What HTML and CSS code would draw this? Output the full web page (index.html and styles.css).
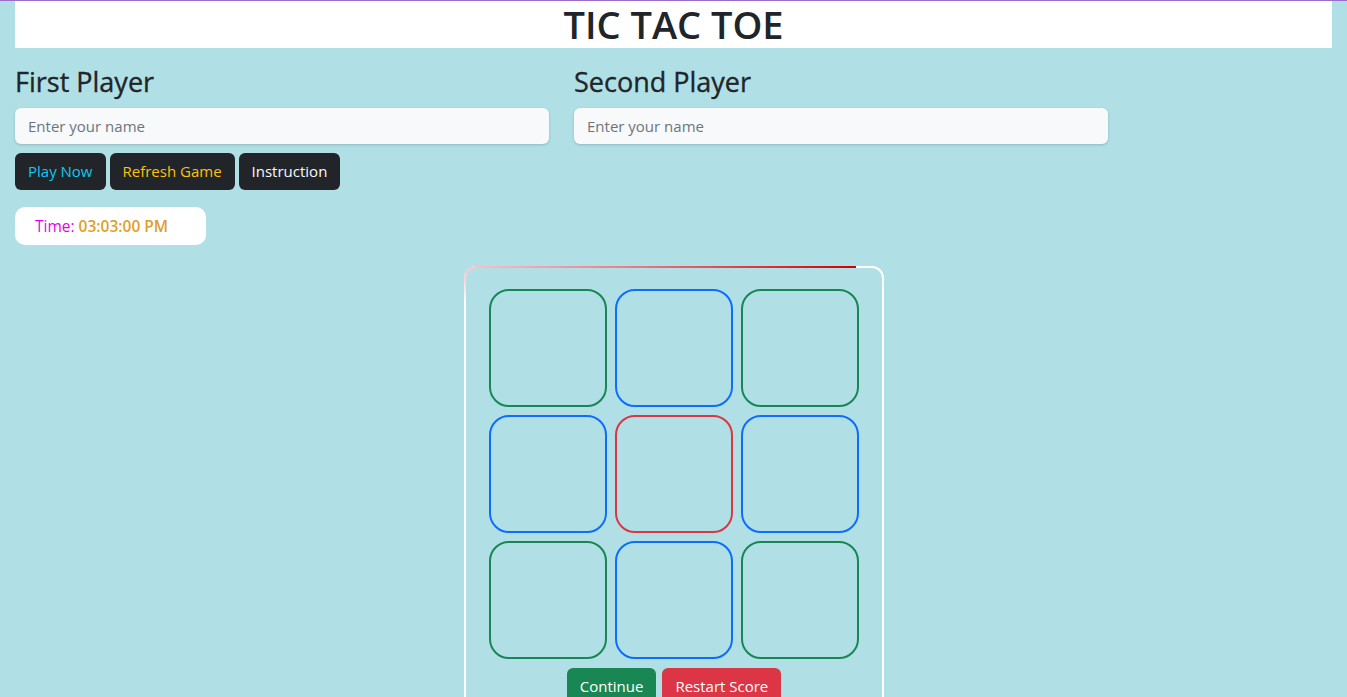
FILE: index.html
```html
<!DOCTYPE html>
<html lang="en">
<head>
<meta charset="utf-8">
<title>Tic Tac Toe</title>
<link rel="stylesheet" href="styles.css">
</head>
<body>
<div class="page">
  <header class="header"><h1 class="title">TIC TAC TOE</h1></header>
  <div class="players">
    <div class="player">
      <h3 class="player-title">First Player</h3>
      <input class="name-input" type="text" placeholder="Enter your name">
    </div>
    <div class="player">
      <h3 class="player-title">Second Player</h3>
      <input class="name-input" type="text" placeholder="Enter your name">
    </div>
  </div>
  <div class="actions">
    <button class="btn btn-dark text-info">Play Now</button>
    <button class="btn btn-dark text-warning">Refresh Game</button>
    <button class="btn btn-dark text-light">Instruction</button>
  </div>
  <div class="time-box"><span class="time-label">Time:</span> <span class="time-value">03:03:00 PM</span></div>
  <div class="board-wrap">
    <div class="board">
      <div class="board-glow"></div>
      <div class="grid">
        <div class="cell green"></div>
        <div class="cell blue"></div>
        <div class="cell green"></div>
        <div class="cell blue"></div>
        <div class="cell red"></div>
        <div class="cell blue"></div>
        <div class="cell green"></div>
        <div class="cell blue"></div>
        <div class="cell green"></div>
      </div>
      <div class="board-actions">
        <button class="btn btn-success">Continue</button>
        <button class="btn btn-danger">Restart Score</button>
      </div>
    </div>
  </div>
</div>
</body>
</html>
```

FILE: styles.css
```css
* { box-sizing: border-box; }
html, body { margin: 0; padding: 0; }
body {
  background: #b0e0e6;
  font-family: "Open Sans", "Noto Sans", sans-serif;
  color: #212529;
  border-top: 1px solid #9a6ccb;
  overflow: hidden;
  height: 697px;
}
.page { padding: 0 15px; }
.header {
  background: #fff;
  height: 47px;
  display: flex;
  align-items: center;
  justify-content: center;
}
.title {
  margin: 0;
  font-size: 38px;
  font-weight: 600;
  line-height: 47px;
}
.players {
  display: grid;
  grid-template-columns: 534px 534px;
  column-gap: 25px;
  margin-top: 17px;
}
.player-title {
  margin: 0 0 9px;
  font-size: 27px;
  font-weight: 500;
  line-height: 34px;
  -webkit-text-stroke: 0.35px #212529;
}
.name-input {
  display: block;
  width: 100%;
  height: 36px;
  border: none;
  border-radius: 6px;
  background: #f8f9fa;
  box-shadow: 0 1px 3px rgba(0,0,0,0.18);
  padding: 0 13px;
  font-family: inherit;
  font-size: 15px;
  color: #212529;
}
.name-input::placeholder { color: #6c757d; }
.actions {
  display: flex;
  gap: 4px;
  margin-top: 9px;
}
.btn {
  border: none;
  border-radius: 6px;
  font-family: inherit;
  font-size: 15px;
  line-height: 24px;
  padding: 6px 13px 7px;
  cursor: pointer;
}
.btn-dark { background: #212529; }
.text-info { color: #0dcaf0; }
.text-warning { color: #ffc107; }
.text-light { color: #f8f9fa; }
.btn-success { background: #198754; color: #fff; }
.btn-danger { background: #dc3545; color: #fff; }
.time-box {
  margin-top: 17px;
  width: 191px;
  height: 38px;
  background: #fff;
  border-radius: 10px;
  padding-left: 20px;
  display: flex;
  align-items: center;
  gap: 4px;
  font-size: 15.5px;
}
.time-label { color: #e600e6; }
.time-value { color: #dea02b; font-weight: 600; }
.board-wrap {
  display: flex;
  justify-content: center;
  margin-top: 21px;
}
.board {
  position: relative;
  width: 420px;
  border: 2px solid #fff;
  border-radius: 12px;
  padding: 21px 22px 20px 23px;
}
.board-glow {
  position: absolute;
  top: -2px;
  left: -2px;
  width: 392px;
  height: 44px;
  border-radius: 12px 0 0 0;
  padding: 2px 0 0 2px;
  background:
    linear-gradient(to bottom, rgba(255,255,255,0) 6px, #fff 38px),
    linear-gradient(to right, #fbc4cb, #e8787f 45%, #d40000);
  -webkit-mask: linear-gradient(#000 0 0) content-box, linear-gradient(#000 0 0);
  -webkit-mask-composite: xor;
  mask-composite: exclude;
}
.grid {
  display: grid;
  grid-template-columns: repeat(3, 118px);
  grid-auto-rows: 118px;
  gap: 8px;
}
.cell {
  border: 2px solid;
  border-radius: 20px;
}
.green { border-color: #198754; }
.blue { border-color: #0d6efd; }
.red { border-color: #dc3545; }
.board-actions {
  display: flex;
  justify-content: center;
  gap: 6px;
  margin-top: 9px;
}
```
